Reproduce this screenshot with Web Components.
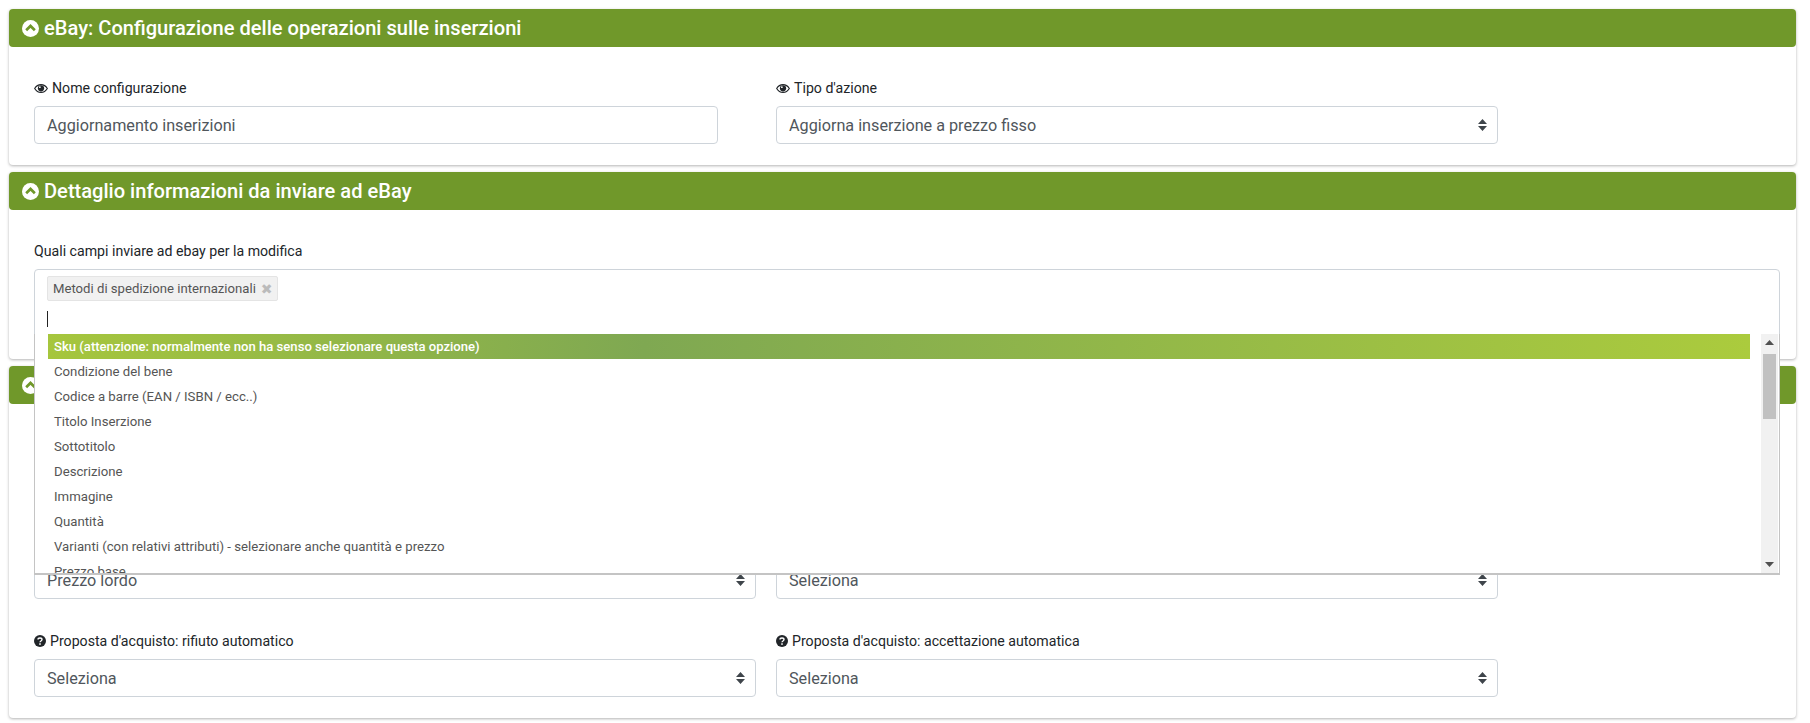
<!DOCTYPE html>
<html lang="it">
<head>
<meta charset="utf-8">
<title>eBay: Configurazione delle operazioni sulle inserzioni</title>
<style>
    html, body { margin: 0; background: #fff; }
    body { padding: 9px 14px 5px 9px; font-family: Roboto, "Liberation Sans", sans-serif; color: #212529; }
    x-panel { margin-bottom: 7px; }
    x-panel:last-child { margin-bottom: 0; }
</style>
</head>
<body>

<x-panel heading="eBay: Configurazione delle operazioni sulle inserzioni" pad="31">
    <x-row>
        <x-field label="Nome configurazione" icon="eye" span="name">
            <x-text-box value="Aggiornamento inserizioni"></x-text-box>
        </x-field>
        <x-field label="Tipo d'azione" icon="eye" span="wide">
            <x-select-box value="Aggiorna inserzione a prezzo fisso"></x-select-box>
        </x-field>
    </x-row>
</x-panel>

<x-panel heading="Dettaglio informazioni da inviare ad eBay" pad="31" class="over">
    <x-field label="Quali campi inviare ad ebay per la modifica">
        <x-multi-select>
            <x-chip slot="chips">Metodi di spedizione internazionali</x-chip>
            <x-option active>Sku (attenzione: normalmente non ha senso selezionare questa opzione)</x-option>
            <x-option>Condizione del bene</x-option>
            <x-option>Codice a barre (EAN / ISBN / ecc..)</x-option>
            <x-option>Titolo Inserzione</x-option>
            <x-option>Sottotitolo</x-option>
            <x-option>Descrizione</x-option>
            <x-option>Immagine</x-option>
            <x-option>Quantità</x-option>
            <x-option>Varianti (con relativi attributi) - selezionare anche quantità e prezzo</x-option>
            <x-option>Prezzo base</x-option>
        </x-multi-select>
    </x-field>
</x-panel>

<x-panel pad="157">
    <x-row>
        <x-field span="half">
            <x-select-box value="Prezzo lordo"></x-select-box>
        </x-field>
        <x-field span="half">
            <x-select-box value="Seleziona"></x-select-box>
        </x-field>
    </x-row>
    <x-row style="margin-top:32px">
        <x-field label="Proposta d'acquisto: rifiuto automatico" icon="help" span="half">
            <x-select-box value="Seleziona"></x-select-box>
        </x-field>
        <x-field label="Proposta d'acquisto: accettazione automatica" icon="help" span="half">
            <x-select-box value="Seleziona"></x-select-box>
        </x-field>
    </x-row>
</x-panel>

<script>
//icons
var ICONS = {
    up: `<svg width="17" height="17" viewBox="0 0 18 18"><circle cx="9" cy="9" r="9" fill="#fff"/><path d="M4.400 10.900 9 6.300l4.600 4.600" fill="none" stroke="#70982a" stroke-width="2.800"/></svg>`,
    eye: `<svg width="14" height="13" viewBox="0 0 16 15"><path d="M.7 7.500C2.400 4.600 5 3 8 3s5.600 1.600 7.300 4.500C13.600 10.400 11 12 8 12S2.400 10.400.7 7.500z" fill="none" stroke="#212529" stroke-width="1.300"/><circle cx="8" cy="7.300" r="3.600" fill="#212529"/><circle cx="6.700" cy="6" r="1" fill="#fff"/></svg>`,
    help: `<svg width="12" height="12" viewBox="0 0 12 12"><circle cx="6" cy="6" r="6" fill="#212529"/><path d="M4 4.600C4 3.500 4.900 3 6 3s2 .6 2 1.600c0 1.500-2 1.300-2 2.700" fill="none" stroke="#fff" stroke-width="1.400"/><rect x="5.200" y="8.300" width="1.600" height="1.500" fill="#fff"/></svg>`
};

var template_panel = document.createElement("template");
template_panel.innerHTML = `
<style>
    :host { display: block; background: #fff; border-radius: 4px; box-shadow: 0 1px 3px rgba(0,0,0,.3); }
    :host(.over) { position: relative; z-index: 2; }
    #head {
        display: flex; align-items: center; gap: 5px;
        height: 38px; padding: 0 13px; box-sizing: border-box;
        background: #70982a; color: #fff; border-radius: 4px;
        font-size: 20.100px; font-weight: 500;
    }
    #head svg { display: block; flex: none; }
    #body { padding: 0 16px 21px 25px; }
</style>
<div id="head"></div>
<div id="body"><slot></slot></div>
`;
class XPanel extends HTMLElement {
    constructor(){
        super();
        this.attachShadow({mode:"open"});
    }
    connectedCallback(){
        this.shadowRoot.appendChild(template_panel.content.cloneNode(true));
        var head = this.shadowRoot.querySelector("#head");
        var text = this.getAttribute("heading") || "";
        head.innerHTML = ICONS.up + "<span></span>";
        head.querySelector("span").textContent = text;
        this.shadowRoot.querySelector("#body").style.paddingTop = this.getAttribute("pad") + "px";
    }
}
customElements.define("x-panel", XPanel);

class XRow extends HTMLElement {
    constructor(){
        super();
        this.attachShadow({mode:"open"});
        this.shadowRoot.innerHTML = `<style>:host{display:flex;gap:20px}</style><slot></slot>`;
    }
}
customElements.define("x-row", XRow);

var template_field = document.createElement("template");
template_field.innerHTML = `
<style>
    :host { display: block; }
    :host([span=name]) { width: 684px; margin-right: 38px; }
    :host([span=wide]) { width: 722px; }
    :host([span=half]) { width: 722px; }
    label { display: flex; align-items: center; gap: 4px; height: 20px; margin-bottom: 8px; font-size: 14.150px; color: #212529; }
    label svg { display: block; flex: none; }
</style>
<label></label>
<slot></slot>
`;
class XField extends HTMLElement {
    constructor(){
        super();
        this.attachShadow({mode:"open"});
    }
    connectedCallback(){
        this.shadowRoot.appendChild(template_field.content.cloneNode(true));
        var lab = this.shadowRoot.querySelector("label");
        var text = this.getAttribute("label");
        if(!text){ lab.remove(); return; }
        lab.innerHTML = (ICONS[this.getAttribute("icon")] || "") + "<span></span>";
        lab.querySelector("span").textContent = text;
    }
}
customElements.define("x-field", XField);

var BOX_CSS = `
    :host { display: block; }
    #box {
        display: flex; align-items: center; justify-content: space-between;
        height: 38px; box-sizing: border-box; padding: 0 10px 0 12px;
        background: #fff; border: 1px solid #ced4da; border-radius: 4px;
        font-size: 16.200px; color: #50565c;
    }
    svg { display: block; }
`;

class XTextBox extends HTMLElement {
    constructor(){
        super();
        this.attachShadow({mode:"open"});
    }
    connectedCallback(){
        this.shadowRoot.innerHTML = `<style>${BOX_CSS}</style><div id="box"></div>`;
        this.shadowRoot.querySelector("#box").textContent = this.getAttribute("value");
    }
}
customElements.define("x-text-box", XTextBox);

class XSelectBox extends HTMLElement {
    constructor(){
        super();
        this.attachShadow({mode:"open"});
    }
    connectedCallback(){
        this.shadowRoot.innerHTML = `<style>${BOX_CSS}</style>
        <div id="box"><span></span>
            <svg width="9" height="12" viewBox="0 0 9 12"><path d="M4.500 0 9 5H0zM4.500 12 0 7h9z" fill="#3f454b"/></svg>
        </div>`;
        this.shadowRoot.querySelector("span").textContent = this.getAttribute("value");
    }
}
customElements.define("x-select-box", XSelectBox);

var template_multi = document.createElement("template");
template_multi.innerHTML = `
<style>
    :host { display: block; position: relative; }
    #box {
        height: 69px; box-sizing: border-box; padding: 6px 12px;
        border: 1px solid #ced4da; border-radius: 4px; background: #fff;
    }
    #caret { width: 1px; height: 16px; margin-top: 10px; background: #222; }
    #drop {
        position: absolute; left: 0; right: 0; top: 65px; height: 241px; box-sizing: border-box;
        display: flex; background: #fff; overflow: hidden;
        border: 1px solid #c4c4c4; border-top: 0; border-bottom-width: 2px;
    }
    #list { flex: 1; min-width: 0; padding: 0 11px 0 13px; overflow: hidden; }
    #bar { flex: none; width: 17px; margin-right: 1px; display: flex; flex-direction: column; background: #f1f1f1; }
    #bar i { display: block; flex: none; height: 17px; position: relative; }
    #bar i svg { position: absolute; left: 4px; top: 6px; }
    #thumb { flex: none; width: 13px; height: 65px; margin: 3px 2px 0; background: #c1c1c1; }
    #gap { flex: 1; }
</style>
<div id="box">
    <slot name="chips"></slot>
    <div id="caret"></div>
</div>
<div id="drop">
    <div id="list"><slot></slot></div>
    <div id="bar">
        <i><svg width="9" height="5" viewBox="0 0 9 5"><path d="M4.500 0 9 5H0z" fill="#505050"/></svg></i>
        <div id="thumb"></div>
        <div id="gap"></div>
        <i><svg width="9" height="5" viewBox="0 0 9 5"><path d="M4.500 5 0 0h9z" fill="#505050"/></svg></i>
    </div>
</div>
`;
class XMultiSelect extends HTMLElement {
    constructor(){
        super();
        this.attachShadow({mode:"open"});
        this.shadowRoot.appendChild(template_multi.content.cloneNode(true));
    }
}
customElements.define("x-multi-select", XMultiSelect);

class XChip extends HTMLElement {
    constructor(){
        super();
        this.attachShadow({mode:"open"});
        this.shadowRoot.innerHTML = `<style>
            :host {
                display: inline-flex; align-items: center; gap: 5px; height: 25px; box-sizing: border-box;
                padding: 0 4px 0 5px; background: #f1f1f1; border: 1px solid #e4e4e4; border-radius: 2px;
                font-size: 13.150px; color: #555;
            }
            b { color: #bbb; font-size: 14px; line-height: 1; font-family: "DejaVu Sans", sans-serif; }
        </style><slot></slot><b>✖</b>`;
    }
}
customElements.define("x-chip", XChip);

class XOption extends HTMLElement {
    constructor(){
        super();
        this.attachShadow({mode:"open"});
        this.shadowRoot.innerHTML = `<style>
            :host {
                display: block; height: 25px; line-height: 25px; padding: 0 6px;
                font-size: 13.200px; color: #555; white-space: nowrap;
            }
            :host([active]) {
                color: #fff; font-weight: 500; font-size: 13.100px;
                background: linear-gradient(to right, #a6c63d 0%, #7fa852 35%, #abcb3d 100%);
            }
        </style><slot></slot>`;
    }
}
customElements.define("x-option", XOption);
</script>
</body>
</html>
